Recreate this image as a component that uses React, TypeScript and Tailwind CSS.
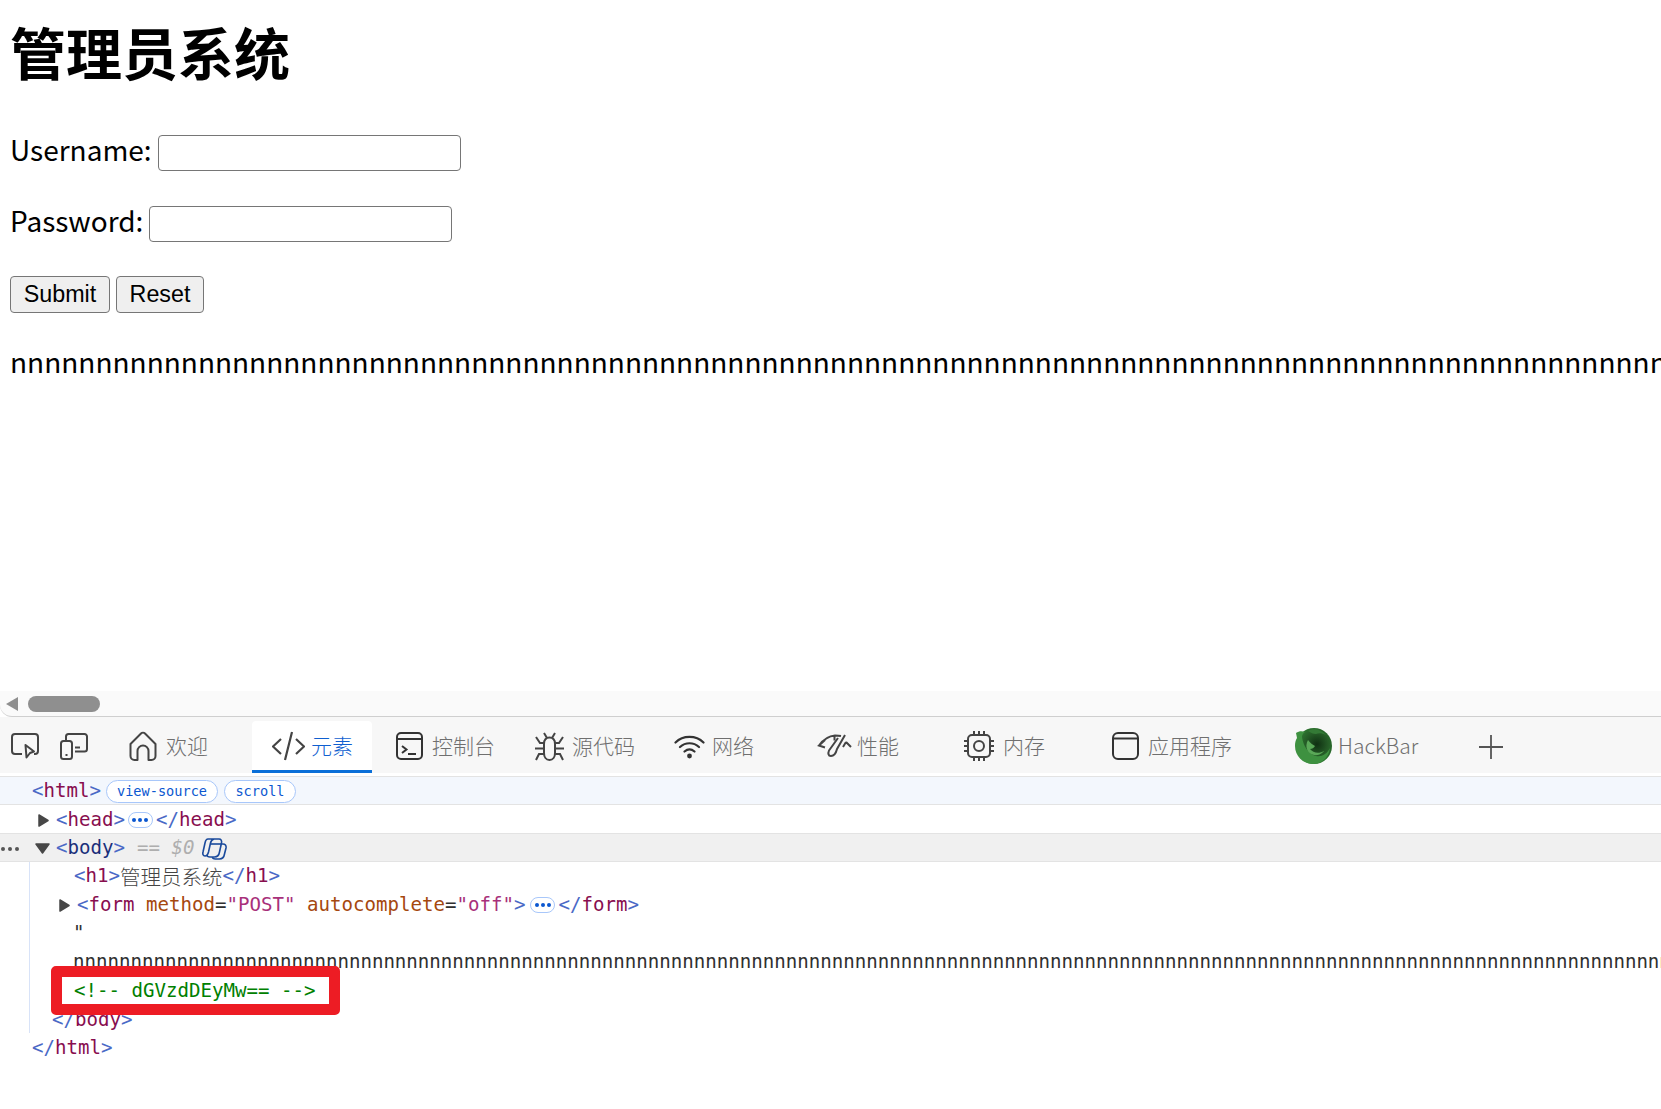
import React from "react";

const cjk = { fontFamily: '"Noto Sans CJK SC", "Noto Sans", sans-serif' };
const mono = { fontFamily: '"DejaVu Sans Mono", "Noto Sans CJK SC", monospace' };

const S = "#444444";

function Inspect() {
  return (
    <svg width="28" height="26" viewBox="0 0 28 26" fill="none" stroke={S} strokeWidth="2">
      <path d="M11 21H4a3 3 0 0 1-3-3V4a3 3 0 0 1 3-3h20a3 3 0 0 1 3 3v14a3 3 0 0 1-3 3h-1" />
      <path d="M14.500 12l8.500 6.500-4 1.500L15.500 24.500z" strokeLinejoin="round" />
    </svg>
  );
}
function Device() {
  return (
    <svg width="28" height="27" viewBox="0 0 28 27" fill="none" stroke={S} strokeWidth="2">
      <path d="M6 7V3.500A2.500 2.500 0 0 1 8.500 1h16A2.500 2.500 0 0 1 27 3.500V16a2.500 2.500 0 0 1-2.500 2.500H15" />
      <rect x="1" y="8" width="11" height="18" rx="2.500" />
      <path d="M15 14.500h5M5.500 22h2" />
    </svg>
  );
}
function Home() {
  return (
    <svg width="28" height="30" viewBox="0 0 28 30" fill="none" stroke={S} strokeWidth="2" strokeLinejoin="round">
      <path d="M1.500 13L12 2.500c1-1 3-1 4 0L26.500 13v12a4 4 0 0 1-4 4H19.500v-9a5.500 5.500 0 0 0-11 0v9H5.500a4 4 0 0 1-4-4z" />
    </svg>
  );
}
function CodeI() {
  return (
    <svg width="33" height="30" viewBox="0 0 33 30" fill="none" stroke={S} strokeWidth="2.200">
      <path d="M9 8l-8 7.500L9 23M24 8l8 7.500L24 23M20 1l-7 28" />
    </svg>
  );
}
function Console() {
  return (
    <svg width="27" height="28" viewBox="0 0 27 28" fill="none" stroke="#333" strokeWidth="2">
      <rect x="1" y="1" width="25" height="26" rx="4" />
      <path d="M1 7h25M6 14l4.500 3.500L6 21M12 22h8" />
    </svg>
  );
}
function Bug() {
  return (
    <svg width="29" height="29" viewBox="0 0 29 29" fill="none" stroke={S} strokeWidth="2">
      <path d="M9 12c0-4 2-6.500 5.500-6.500S20 8 20 12v9c0 4-2 7-5.500 7S9 25 9 21z" />
      <path d="M12 6L9 1M17 6l3-5M9 11H5L1 5M20 11h4l4-6M0 16.500h9M20 16.500h9M9 22H4l-3 6M20 22h5l3 6" />
    </svg>
  );
}
function Wifi() {
  return (
    <svg width="31" height="26" viewBox="0 0 31 26" fill="none" stroke="#333" strokeWidth="2.200" strokeLinecap="round">
      <path d="M1.500 9.500C9 2 22 2 29.500 9.500M6 14c5.500-5 13.500-5 19 0M10.500 18.500c3-2.500 7-2.500 10 0" />
      <circle cx="15.500" cy="23" r="2.400" fill="#333" stroke="none" />
    </svg>
  );
}
function Gauge() {
  return (
    <svg width="35" height="24" viewBox="0 0 35 24" fill="none" stroke={S} strokeWidth="2">
      <path d="M8 6L2 11.500l6 2M2 11.500C6 6 11 2 18 1.500c2 0 4 0 6 .5M17.500 1.500v5M29 8l5 5M29 8l-3 5" />
      <path d="M28 1L20 15c-1 4-3 7-6 7-3 0-3-3-2-5.500L21 4" strokeLinejoin="round" />
    </svg>
  );
}
function Memory() {
  return (
    <svg width="32" height="32" viewBox="0 0 32 32" fill="none" stroke={S} strokeWidth="2">
      <rect x="5" y="5" width="22" height="22" rx="4" />
      <circle cx="16" cy="16" r="5" />
      <path d="M11 1v4M16 1v4M21 1v4M11 27v4M16 27v4M21 27v4M1 11h4M1 16h4M1 21h4M27 11h4M27 16h4M27 21h4" />
    </svg>
  );
}
function AppI() {
  return (
    <svg width="27" height="28" viewBox="0 0 27 28" fill="none" stroke="#333" strokeWidth="2">
      <rect x="1" y="1" width="25" height="26" rx="5" />
      <path d="M1 6.500h25" />
    </svg>
  );
}
function Hack() {
  return (
    <svg width="38" height="36" viewBox="0 0 38 36">
      <defs>
        <radialGradient id="hb" cx="58%" cy="45%" r="55%">
          <stop offset="0%" stopColor="#0f2f12" />
          <stop offset="55%" stopColor="#245a26" />
          <stop offset="100%" stopColor="#2f7a32" />
        </radialGradient>
      </defs>
      <circle cx="20" cy="18" r="18" fill="url(#hb)" />
      <path d="M2 5c3-2 6-2 9-1-2 1-3 3-3 5 1 8 6 17 14 19 6 1 11-2 14-8-1 9-8 16-17 16C9 36 1 28 1 18c0-3 .5-6 2-8z" fill="#3e9140" />
      <path d="M14 12c2 3 5 5 7 6-1 2-3 3-5 3 3 4 9 5 14 2 0 0-3 5-10 4C14 26 10 19 14 12z" fill="#5aa858" />
      <path d="M14 3c5-3 13-2 18 4-4-2-7-2-10-1-3 0-5-1-8-3z" fill="#347a36" />
    </svg>
  );
}

function Tab({ icon, label, cls, gap }: { icon: React.ReactNode; label: string; cls: string; gap: string }) {
  return (
    <div className={`flex items-center shrink-0 ${cls}`}>
      {icon}
      <span className={`${gap} mb-[2px] text-[21px] font-light leading-none whitespace-nowrap text-[#6f6f6f]`} style={cjk}>
        {label}
      </span>
    </div>
  );
}

const T = ({ children }: { children: React.ReactNode }) => <span className="text-[#4a69c6]">{children}</span>;
const N = ({ children }: { children: React.ReactNode }) => <span className="text-[#880e4f]">{children}</span>;

function Dots({ cls }: { cls: string }) {
  return (
    <span className={`inline-flex items-center justify-center gap-[2px] w-[25px] h-[16px] rounded-[8px] border border-[#a8c7fa] bg-white ${cls}`}>
      <i className="block w-[4px] h-[4px] rounded-full bg-[#0b57d0]" />
      <i className="block w-[4px] h-[4px] rounded-full bg-[#0b57d0]" />
      <i className="block w-[4px] h-[4px] rounded-full bg-[#0b57d0]" />
    </span>
  );
}
const Tri = ({ down }: { down?: boolean }) =>
  down ? (
    <svg width="15" height="11" viewBox="0 0 15 11" className="shrink-0"><path d="M1 1h13L7.500 10z" fill="#474747" stroke="#474747" strokeWidth="1.500" strokeLinejoin="round" /></svg>
  ) : (
    <svg width="11" height="13" viewBox="0 0 11 13" className="shrink-0"><path d="M1 1L10 6.500 1 12z" fill="#474747" stroke="#474747" strokeWidth="1.500" strokeLinejoin="round" /></svg>
  );

function Pill({ children, cls }: { children: React.ReactNode; cls: string }) {
  return (
    <span className={`inline-flex items-center justify-center h-[23px] rounded-[12px] border border-[#a8c7fa] bg-white text-[13.600px] text-[#0b57d0] ${cls}`}>
      {children}
    </span>
  );
}

const Row = ({ cls, children }: { cls: string; children: React.ReactNode }) => (
  <div className={`flex items-center h-[28px] shrink-0 whitespace-nowrap ${cls}`}>{children}</div>
);

export default function App() {
  const ns = "n".repeat(200);
  return (
    <div className="w-[1661px] h-[1109px] overflow-hidden bg-white text-black relative">
      <div className="h-[691px] overflow-hidden pl-[10px]" style={cjk}>
        <h1 className="text-[56px] font-bold leading-[80px] pt-[11px]">管理员系统</h1>
        <form className="mt-[44px]">
          <div className="flex items-center h-[36px] text-[28px]">
            <span className="mb-[8px]">Username:</span>
            <input className="ml-[6px] w-[303px] h-[36px] border-[1.500px] border-[#767676] rounded-[4px] bg-white" />
          </div>
          <div className="flex items-center h-[36px] mt-[35px] text-[28px]">
            <span className="mb-[8px]">Password:</span>
            <input type="password" className="ml-[6px] w-[303px] h-[36px] border-[1.500px] border-[#767676] rounded-[4px] bg-white" />
          </div>
          <div className="flex gap-[6px] mt-[34px] text-[23.300px] text-black" style={{ fontFamily: '"Liberation Sans", sans-serif' }}>
            <button type="button" className="w-[100px] h-[37px] border-[1.500px] border-[#767676] rounded-[4px] bg-[#efefef]">Submit</button>
            <button type="button" className="w-[88px] h-[37px] border-[1.500px] border-[#767676] rounded-[4px] bg-[#efefef]">Reset</button>
          </div>
        </form>
        <p className="mt-[28px] text-[28px] leading-[40px] whitespace-nowrap">{ns}</p>
      </div>

      <div className="h-[26px] bg-[#fafafa] rounded-bl-[12px] border-b-[1.500px] border-[#cfcfcf] flex items-center pl-[6px]">
        <svg width="12" height="14" viewBox="0 0 12 14"><path d="M12 0v14L0 7z" fill="#8f8f8f" /></svg>
        <div className="ml-[10px] w-[72px] h-[16px] rounded-[8px] bg-[#8f8f8f]" />
      </div>

      <div className="h-[59px] pt-[2px] bg-[#f7f7f7] flex items-center border-b-[3px] border-white">
        <div className="ml-[11px] shrink-0 flex"><Inspect /></div>
        <div className="ml-[21px] shrink-0 flex"><Device /></div>
        <Tab icon={<Home />} label="欢迎" cls="ml-[41px]" gap="ml-[9px]" />
        <div className="ml-[44px] w-[120px] h-[52px] self-end bg-white rounded-t-[4px] border-b-[3px] border-[#0a6fd8] flex items-center pl-[20px] shrink-0">
          <CodeI />
          <span className="ml-[6px] text-[21px] font-light leading-none text-[#0f5fd0]" style={cjk}>元素</span>
        </div>
        <Tab icon={<Console />} label="控制台" cls="ml-[24px]" gap="ml-[9px]" />
        <Tab icon={<Bug />} label="源代码" cls="ml-[40px]" gap="ml-[8px]" />
        <Tab icon={<Wifi />} label="网络" cls="ml-[39px]" gap="ml-[7px]" />
        <Tab icon={<Gauge />} label="性能" cls="ml-[63px]" gap="ml-[5px]" />
        <Tab icon={<Memory />} label="内存" cls="ml-[64px]" gap="ml-[8px]" />
        <Tab icon={<AppI />} label="应用程序" cls="ml-[67px]" gap="ml-[9px]" />
        <Tab icon={<Hack />} label="HackBar" cls="ml-[62px]" gap="ml-[6px]" />
        <svg className="ml-[61px] mt-[2px] shrink-0" width="24" height="24" viewBox="0 0 24 24" fill="none" stroke="#555" strokeWidth="1.800"><path d="M0 12h24M12 0v24" /></svg>
      </div>

      <div className="text-[19.100px] text-[#303030] relative" style={mono}>
        <Row cls="h-[29px] pt-[2px] bg-[#f3f7fd] border-y border-[#e3e3e3] pl-[32px]">
          <T>&lt;</T><N>html</N><T>&gt;</T>
          <Pill cls="ml-[5px] w-[112px]">view-source</Pill>
          <Pill cls="ml-[6px] w-[72px]">scroll</Pill>
        </Row>
        <Row cls="pt-[2px] pl-[38px]">
          <Tri />
          <span className="ml-[7px]"><T>&lt;</T><N>head</N><T>&gt;</T></span>
          <Dots cls="mx-[3px]" />
          <span><T>&lt;/</T><N>head</N><T>&gt;</T></span>
        </Row>
        <Row cls="h-[29px] pt-[2px] bg-[#f0f0f0] border-y border-[#e3e3e3] pl-[1px]">
          <span className="flex gap-[3px] w-[34px]">
            <i className="block w-[4px] h-[4px] rounded-full bg-[#555]" />
            <i className="block w-[4px] h-[4px] rounded-full bg-[#555]" />
            <i className="block w-[4px] h-[4px] rounded-full bg-[#555]" />
          </span>
          <Tri down />
          <span className="ml-[6px]"><T>&lt;</T><span className="text-[#1b2f7a]">body</span><T>&gt;</T></span>
          <span className="ml-[12px] text-[#aeaeae] italic">== $0</span>
          <svg className="ml-[8px] shrink-0" width="25" height="22" viewBox="0 0 25 22" fill="none" stroke="#1a4a9c" strokeWidth="1.600">
            <path d="M6 1h6c-2 .5-3 2-3.500 4L6.500 14c-.5 2-1.500 4-3.500 4S.5 16 1 14L3 5C3.500 2.500 4.500 1 6 1z" />
            <path d="M12 1h5c2 0 3 1.500 2.500 4l-2 9c-.5 3-2.500 5-5 5H8c-2 0-3-1-3-2" />
            <path d="M19.500 6H21c2 0 3.500 1.500 3 4l-1.500 6c-.5 3-2.500 5-5 5h-4c-2 0-3-1-3-2" />
            <path d="M8.500 6h11" />
          </svg>
        </Row>

        <div className="relative">
          <div className="ml-[29px] border-l-[1.500px] border-[#d8e3f8]">
            <Row cls="pl-[44px]">
              <T>&lt;</T><N>h1</N><T>&gt;</T>
              <span className="text-[20.500px] text-[#444] font-light" style={cjk}>管理员系统</span>
              <T>&lt;/</T><N>h1</N><T>&gt;</T>
            </Row>
            <Row cls="pt-[2px] pl-[29px]">
              <Tri />
              <span className="ml-[7px]">
                <T>&lt;</T><N>form</N>{" "}
                <span className="text-[#a5480f]">method</span>=<span className="text-[#a8307a]">"POST"</span>{" "}
                <span className="text-[#a5480f]">autocomplete</span>=<span className="text-[#a8307a]">"off"</span>
                <T>&gt;</T>
              </span>
              <Dots cls="ml-[5px] mr-[3px]" />
              <span><T>&lt;/</T><N>form</N><T>&gt;</T></span>
            </Row>
            <Row cls="pt-[2px] pl-[43px]">"</Row>
            <Row cls="pt-[2px] pl-[43px] h-[31px]">{ns.repeat(2)}</Row>
            <Row cls="pl-[44px] text-[#008000]">&lt;!-- dGVzdDEyMw== --&gt;</Row>
            <Row cls="pt-[2px] pl-[22px]"><T>&lt;/</T><N>body</N><T>&gt;</T></Row>
          </div>
          <Row cls="pt-[2px] pl-[32px]"><T>&lt;/</T><N>html</N><T>&gt;</T></Row>
          <div className="absolute left-[51px] top-[104px] w-[289px] h-[49px] border-[11px] border-[#ed1c24] rounded-[5px]" />
        </div>
      </div>
    </div>
  );
}
